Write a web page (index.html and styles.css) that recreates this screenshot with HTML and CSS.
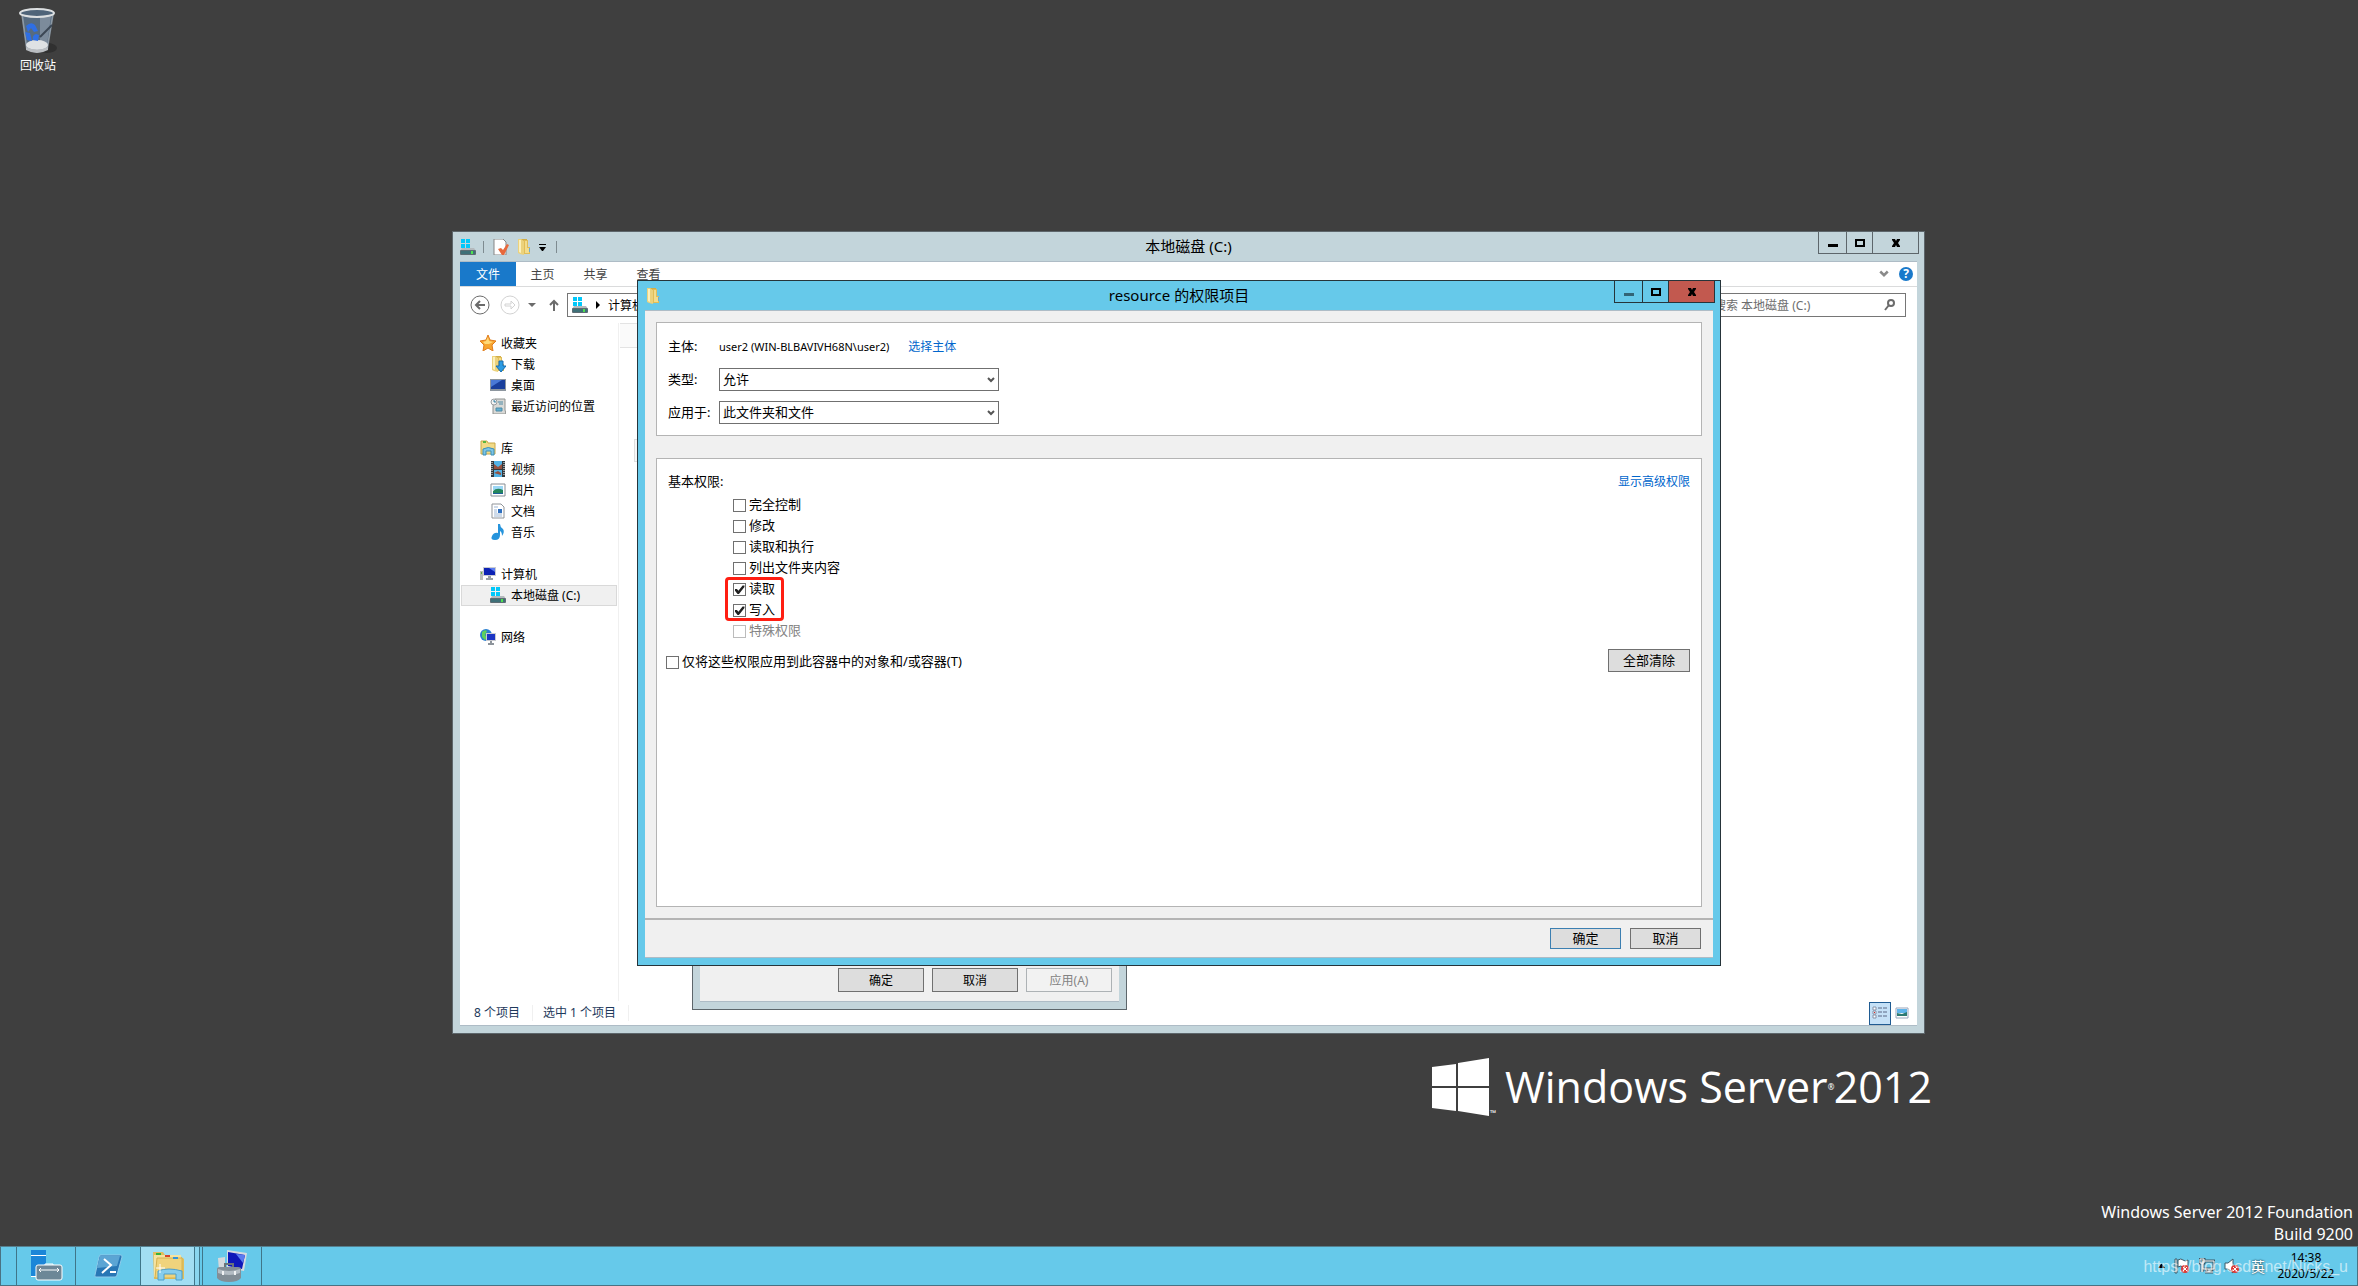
FILE: index.html
```html
<!DOCTYPE html>
<html lang="zh-CN">
<head>
    <meta charset="UTF-8">
    <meta name="viewport" content="width=device-width, initial-scale=1.0">
    <title>Windows Server 2012</title>
    <link rel="stylesheet" href="styles.css">
</head>
<body>
    <!-- shared icons -->
    <svg class="sprite" aria-hidden="true">
        <symbol id="i-drive" viewBox="0 0 16 16">
            <path d="M1 0h4v4H1zM6 0h4v4H6zM1 5h4v4H1zM6 5h4v4H6z" fill="#00c8fa"/>
            <path d="M2 9h12l2 3H0z" fill="#b4babd"/>
            <rect x="0" y="11" width="16" height="5" rx="1" fill="#5d6c73"/>
            <rect x="1" y="12" width="14" height="3" fill="#3f7078"/>
            <rect x="11" y="12" width="2" height="3" fill="#4fe04f"/>
        </symbol>
        <symbol id="i-folder" viewBox="0 0 16 16">
            <path d="M2 0h9v14H2z" fill="#d2ad45"/>
            <path d="M8 1h4v7h2v7H8z" fill="#e0bd58"/>
            <path d="M9 2h2v7h2v5H9z" fill="#f3dc8c"/>
            <path d="M2 0h3l3 2v14l-4-1-2-1z" fill="#ecd27c"/>
            <path d="M3 1h2v13l-2-1z" fill="#fbf0bd"/>
            <path d="M13 9h1v4h-1z" fill="#6fa9cf"/>
        </symbol>
        <symbol id="i-min" viewBox="0 0 10 10"><path d="M0 6h10v3H0z" fill="currentColor"/></symbol>
        <symbol id="i-max" viewBox="0 0 10 10"><path d="M0 1h10v8H0zM2 3v4h6V3z" fill-rule="evenodd" fill="currentColor"/></symbol>
        <symbol id="i-close" viewBox="0 0 10 10"><path d="M1 1h3l1 2 1-2h3v1L7 5l2 3v1H6L5 7 4 9H1V8l2-3-2-3z" fill="currentColor"/></symbol>
        <symbol id="i-chevron" viewBox="0 0 8 6"><path d="M1 1l3 3 3-3" fill="none" stroke="currentColor" stroke-width="2"/></symbol>
        <symbol id="i-screen" viewBox="0 0 16 16">
            <path d="M0 5h3v9H0z" fill="#b9bdb9"/><path d="M1 6h1v2H1z" fill="#60b040"/>
            <path d="M3 1h13v9H3z" fill="#c9cbd0"/><path d="M4 2h11v7H4z" fill="#0c22b4"/><path d="M9 2h6v4z" fill="#5b7cf0"/>
            <path d="M8 10h3v2h2v2H6v-2h2z" fill="#9aa0a6"/>
        </symbol>
    </svg>

    <main class="desktop">
        <a class="shortcut" href="#">
            <svg width="40" height="48" viewBox="0 0 40 48">
                <ellipse cx="29" cy="41" rx="10" ry="5" fill="#303030"/>
                <path d="M3 6l5 36q11 7 22 0l6-36z" fill="#8c99a5"/>
                <path d="M5 8l4 30q10 4 20 0l5-30q-15 5-29 0z" fill="#566b80"/>
                <path d="M22 9l11 0-4 29h-7z" fill="#7c8b9b"/>
                <path d="M34 18L22 30" stroke="#3c4754" stroke-width="2"/>
                <ellipse cx="19" cy="38" rx="11" ry="5" fill="#dfe2e4"/>
                <path d="M8 40q11 5 22 0v3q-11 6-22 0z" fill="#b9bdc1"/>
                <path d="M8 19q5-5 9-1l3 6-4 1-3-4-3 4zM7 25l5 1 2 8-5-1zM15 33q-1-5 3-6l3 1-1 6z" fill="#2f6fe4"/>
                <ellipse cx="19" cy="6" rx="17" ry="4" fill="#4f6479" stroke="#dcdfe1" stroke-width="2"/>
            </svg>
            <span>回收站</span>
        </a>

        <section class="window explorer">
            <header class="titlebar">
                <div class="quick">
                    <svg width="16" height="16"><use href="#i-drive"/></svg>
                    <i class="bar"></i>
                    <svg width="16" height="16" viewBox="0 0 16 16">
                        <path d="M1 0h9l3 3v13H1z" fill="#fff" stroke="#858585"/>
                        <path d="M5 10l3-1 2 2 4-6 2 1-5 10H9z" fill="#e8693c"/>
                    </svg>
                    <svg width="16" height="16"><use href="#i-folder"/></svg>
                    <svg class="menu-caret" width="7" height="7" viewBox="0 0 7 7"><path d="M0 0h7v1H0zM0 3h7L4 7H3z"/></svg>
                    <i class="bar"></i>
                </div>
                <h1>本地磁盘 (C:)</h1>
                <div class="controls">
                    <button aria-label="最小化"><svg width="10" height="10"><use href="#i-min"/></svg></button>
                    <button aria-label="最大化"><svg width="10" height="10"><use href="#i-max"/></svg></button>
                    <button aria-label="关闭"><svg width="10" height="10"><use href="#i-close"/></svg></button>
                </div>
            </header>
            <div class="client">
                <nav class="ribbon">
                    <button class="active">文件</button>
                    <button>主页</button>
                    <button>共享</button>
                    <button>查看</button>
                    <svg class="expand" width="10" height="8"><use href="#i-chevron"/></svg>
                    <button class="help" aria-label="帮助">?</button>
                </nav>
                <div class="address-row">
                    <button class="back" aria-label="后退">
                        <svg width="20" height="20" viewBox="0 0 20 20" fill="none" stroke="#6b6b6b" stroke-width="2">
                            <circle cx="10" cy="10" r="9" stroke-width="1"/><path d="M15 10H6M10 6l-4 4 4 4"/>
                        </svg>
                    </button>
                    <button aria-label="前进">
                        <svg width="20" height="20" viewBox="0 0 20 20" fill="none" stroke="#d2d2d2">
                            <circle cx="10" cy="10" r="9"/><path d="M5 9h6V6l4 4-4 4v-3H5z"/>
                        </svg>
                    </button>
                    <svg width="8" height="4" viewBox="0 0 8 4"><path d="M0 0h8L4 4z" fill="#6b6b6b"/></svg>
                    <button class="up" aria-label="上移">
                        <svg width="10" height="12" viewBox="0 0 10 12" fill="none" stroke="#6b6b6b" stroke-width="2"><path d="M5 12V2M1 6l4-4 4 4"/></svg>
                    </button>
                    <div class="address">
                        <svg width="16" height="16"><use href="#i-drive"/></svg>
                        <svg width="4" height="8" viewBox="0 0 4 8"><path d="M0 0l4 4-4 4z"/></svg>
                        <span>计算机</span>
                    </div>
                    <div class="search">
                        <input type="text" placeholder="搜索 本地磁盘 (C:)" aria-label="搜索">
                        <svg width="12" height="12" viewBox="0 0 12 12" fill="none" stroke="#6b6b6b" stroke-width="2"><circle cx="7" cy="4" r="3"/><path d="M5 6l-4 5"/></svg>
                    </div>
                </div>
                <div class="body">
                    <aside class="tree">
                        <ul>
                            <li><svg viewBox="0 0 16 16"><path d="M8 0l2 5 6 1-4 4 1 6-5-3-5 3 1-6-4-4 6-1z" fill="#f7a530" stroke="#e07c1c"/><path d="M8 2l1 4 4 1-4 2-4 0-2-2 3-1z" fill="#ffd978"/></svg>收藏夹
                                <ul>
                                    <li><svg viewBox="0 0 16 16"><use href="#i-folder"/><path d="M9 5h4v5h3l-5 6-5-6h3z" fill="#2b9be4" stroke="#1a6cae"/></svg>下载</li>
                                    <li><svg viewBox="0 0 16 16"><path d="M0 2h16v12H0z" fill="#8d969f"/><path d="M1 3h14v9H1z" fill="#1a3f9c"/><path d="M1 3h11L1 10z" fill="#4a79d6"/></svg>桌面</li>
                                    <li><svg viewBox="0 0 16 16"><path d="M5 1h10v11l1 4H3V8z" fill="#d9d9d6" stroke="#8f9291"/><circle cx="4" cy="4" r="3" fill="#f3f3f3" stroke="#9a9d9f"/><path d="M4 2v2h2M8 4h5M9 6h4M6 10h6v3H6z" fill="#63b1d4" stroke="#4e8aa5"/></svg>最近访问的位置</li>
                                </ul>
                            </li>
                            <li><svg viewBox="0 0 16 16"><path d="M1 1h6l1 2h7v11H1z" fill="#f1da87" stroke="#c9a849"/><path d="M3 1h3v2H3z" fill="#59b540"/><path d="M3 15V9q5-3 11 0v6h-3v-4H6v4z" fill="#7cc5e6" stroke="#3d8fb8"/></svg>库
                                <ul>
                                    <li><svg viewBox="0 0 16 16"><path d="M1 0h14v16H1z" fill="#33383c"/><path d="M4 0h8v8H4zM4 9h8v7H4z" fill="#53b3e6"/><path d="M4 3l4 3 4-3v5H4zM4 12l4-2 3 2v2z" fill="#96513f"/><path d="M2 1v14M14 1v14" stroke="#fff" stroke-dasharray="1 1"/></svg>视频</li>
                                    <li><svg viewBox="0 0 16 16"><path d="M1 2h14v12H1z" fill="#fff" stroke="#868d94"/><path d="M3 4h10v4H3z" fill="#9bd6f5"/><path d="M3 9q4-4 10-1v4H3z" fill="#24865d"/><path d="M3 11h10v1H3z" fill="#1d5f99"/></svg>图片</li>
                                    <li><svg viewBox="0 0 16 16"><path d="M2 1h9l3 3v11H2z" fill="#fff" stroke="#8f9499"/><path d="M4 4h4M4 7h3M4 9h3M4 11h8M4 13h8" stroke="#9db6d3"/><path d="M8 6h4v4H8z" fill="#2d6fc0"/></svg>文档</li>
                                    <li><svg viewBox="0 0 16 16"><path d="M8 0h2q0 3 3 5 2 3-1 7 0-4-2-5v4q0 5-5 5t-3-4 6-3z" fill="#2694dc"/></svg>音乐</li>
                                </ul>
                            </li>
                            <li><svg viewBox="0 0 16 16"><use href="#i-screen"/></svg>计算机
                                <ul>
                                    <li class="selected"><svg viewBox="0 0 16 16"><use href="#i-drive"/></svg>本地磁盘 (C:)</li>
                                </ul>
                            </li>
                            <li><svg viewBox="0 0 16 16"><circle cx="6" cy="6" r="6" fill="#2a7fd0"/><path d="M2 3q3-3 5-1L5 6l2 3-2 2-3-3z" fill="#5ed15a"/><path d="M6 4h10v8H6z" fill="#c9cbd0"/><path d="M7 5h8v6H7z" fill="#1b35c4"/><path d="M10 12h2v2h2v2H8v-2h2z" fill="#8d949b"/></svg>网络</li>
                        </ul>
                    </aside>
                    <div class="files">
                        <div class="file-head"></div>
                        <div class="file-row"></div>
                    </div>
                </div>
                <footer class="status">
                    <span>8 个项目</span>
                    <span>选中 1 个项目</span>
                    <div class="views">
                        <button class="active" aria-label="详细信息">
                            <svg width="16" height="14" viewBox="0 0 16 14"><path d="M1 1h3v3H1zM1 5h3v3H1zM1 9h3v3H1z" fill="#fff" stroke="#8592a8"/><path d="M6 2h4M11 2h4M6 6h4M11 6h4M6 10h4M11 10h4" stroke="#5c6885"/><path d="M2 6h1v1H2z" fill="#d22"/></svg>
                        </button>
                        <button aria-label="大图标">
                            <svg width="14" height="12" viewBox="0 0 14 12"><path d="M1 1h12v10H1z" fill="#fff" stroke="#98a5bb"/><path d="M2 2h10v4H2z" fill="#5fb4ea"/><path d="M2 6l5 1 5-2v4H2z" fill="#2d7a72"/></svg>
                        </button>
                    </div>
                </footer>
            </div>
        </section>

        <section class="window properties">
            <div class="client">
                <button class="btn">确定</button>
                <button class="btn">取消</button>
                <button class="btn" disabled>应用(A)</button>
            </div>
        </section>

        <section class="window dialog">
            <header class="titlebar">
                <div class="quick"><svg width="16" height="16"><use href="#i-folder"/></svg></div>
                <h1>resource 的权限项目</h1>
                <div class="controls">
                    <button class="dim" aria-label="最小化"><svg width="10" height="10"><use href="#i-min"/></svg></button>
                    <button aria-label="最大化"><svg width="10" height="10"><use href="#i-max"/></svg></button>
                    <button class="close" aria-label="关闭"><svg width="10" height="10"><use href="#i-close"/></svg></button>
                </div>
            </header>
            <form class="client">
                <div class="panel principal">
                    <span>主体:</span>
                    <p>user2 (WIN-BLBAVIVH68N\user2) <a href="#">选择主体</a></p>
                    <label for="type">类型:</label>
                    <div class="combo">
                        <select id="type"><option>允许</option></select>
                        <svg width="8" height="6"><use href="#i-chevron"/></svg>
                    </div>
                    <label for="scope">应用于:</label>
                    <div class="combo">
                        <select id="scope"><option>此文件夹和文件</option></select>
                        <svg width="8" height="6"><use href="#i-chevron"/></svg>
                    </div>
                </div>
                <div class="panel permissions">
                    <div class="panel-head">
                        <span>基本权限:</span>
                        <a href="#">显示高级权限</a>
                    </div>
                    <div class="checks">
                        <label><input type="checkbox">完全控制</label>
                        <label><input type="checkbox">修改</label>
                        <label><input type="checkbox">读取和执行</label>
                        <label><input type="checkbox">列出文件夹内容</label>
                        <div class="marked">
                            <label><input type="checkbox" checked>读取</label>
                            <label><input type="checkbox" checked>写入</label>
                        </div>
                        <label class="disabled"><input type="checkbox" disabled>特殊权限</label>
                    </div>
                    <div class="panel-foot">
                        <label><input type="checkbox">仅将这些权限应用到此容器中的对象和/或容器(T)</label>
                        <button type="button" class="btn">全部清除</button>
                    </div>
                </div>
                <footer>
                    <button type="button" class="btn default">确定</button>
                    <button type="button" class="btn">取消</button>
                </footer>
            </form>
        </section>

        <div class="brand">
            <svg width="58" height="60" viewBox="0 0 58 60"><path d="M0 9l24-3v22H0zM26 5l31-5v28H26zM0 30h24v23L0 50zM26 30h31v28l-31-5z" fill="#fff"/></svg>
            <small>™</small>
            <span class="brand-name">Windows Server</span>
            <small class="reg">®</small>
            <span class="brand-name">2012</span>
        </div>
        <p class="build">Windows Server 2012 Foundation<br>Build 9200</p>
    </main>

    <footer class="taskbar">
        <button class="task" aria-label="服务器管理器">
            <svg width="34" height="32" viewBox="0 0 34 32">
                <path d="M2 0h15v5H2zM2 6h15v21H2z" fill="#1b86d8"/><path d="M2 5h15v1H2zM2 26h6v1H2z" fill="#fff"/>
                <rect x="7" y="15" width="26" height="15" rx="2" fill="#6d8797" stroke="#fff"/>
                <path d="M16 15v-1h8v1M10 20h20M12 18l-2 2 2 2M28 18l2 2-2 2" fill="none" stroke="#fff"/>
            </svg>
        </button>
        <button class="task wide" aria-label="PowerShell">
            <svg width="30" height="24" viewBox="0 0 30 24">
                <path d="M7 1h21q1 0 1 2l-5 18q0 2-2 2H3q-2 0-1-2L6 3z" fill="#2877b5" stroke="#8ecbea"/>
                <path d="M7 2h20l-3 10-20 2z" fill="#5ba5d4"/>
                <path d="M11 5l7 6-9 8M17 18h6" fill="none" stroke="#fff" stroke-width="2"/>
            </svg>
        </button>
        <button class="task open" aria-label="文件资源管理器">
            <svg width="34" height="32" viewBox="0 0 34 32">
                <path d="M2 2h10l2 3h14l5 4v20H3z" fill="#e2be5c"/>
                <path d="M3 5h27v22H3z" fill="#f5e2a0"/><path d="M6 8h25v20H4z" fill="#f0d37c" stroke="#d4b252"/>
                <path d="M5 3h5v2H5z" fill="#35b13a"/><path d="M14 5h5v2h-5z" fill="#d6452b"/><path d="M22 7h5v2h-5z" fill="#3294d8"/>
                <path d="M7 30v-9q10-4 24 0v9h-6v-6H13v6z" fill="#86cdee" stroke="#4f9fc9"/>
                <path d="M9 14v9M5 18h9" stroke="#fff"/>
            </svg>
        </button>
        <i class="stack"></i>
        <button class="task" aria-label="计算机管理">
            <svg width="32" height="32" viewBox="0 0 32 32">
                <path d="M2 8l7-1v14H3z" fill="#d5d9dc"/><path d="M11 0l20 3-3 18-17-3z" fill="#d7dbe0"/><path d="M12 2l17 3-3 14-14-3z" fill="#0e18b8"/><path d="M20 4l9 1-2 8z" fill="#5a7cf0"/>
                <path d="M9 17v-3h8v3" fill="none" stroke="#6a737a" stroke-width="2"/>
                <path d="M1 19q0-2 3-2h18q3 0 3 2v9q-3 4-12 4T1 28z" fill="#838e96"/><path d="M2 19q11 4 22 0v4q-11 4-22 0z" fill="#b3bcc3"/>
                <path d="M6 21h2v4H6zM18 21h2v4h-2z" fill="#f0f2f3"/>
            </svg>
        </button>
        <div class="tray">
            <svg width="7" height="4" viewBox="0 0 7 4"><path d="M0 4h7L4 0H3z"/></svg>
            <svg width="16" height="16" viewBox="0 0 16 16"><path d="M1 1h2v14H1zM4 2q3-2 5 0t5 0v7q-3 2-5 0t-5 0z" fill="#fff" stroke="#3b5a68"/><circle cx="11" cy="11" r="4" fill="#db3a33"/><path d="M9 9l4 4M13 9l-4 4" stroke="#fff"/></svg>
            <svg width="16" height="16" viewBox="0 0 16 16"><path d="M4 3h11v8H4zM6 14h8M10 11v3M1 1h4v4H1zM3 5v9" fill="none" stroke="#3b5a68" stroke-width="3"/><path d="M4 3h11v8H4zM6 14h8M10 11v3M1 1h4v4H1zM3 5v9" fill="none" stroke="#fff"/></svg>
            <svg width="16" height="16" viewBox="0 0 16 16"><path d="M1 5h3l5-4v14l-5-4H1z" fill="#fff" stroke="#3b5a68"/><circle cx="11" cy="11" r="4" fill="#db3a33"/><path d="M9 9l4 4M13 9l-4 4" stroke="#fff"/></svg>
            <span class="ime">英</span>
            <time>14:38<br>2020/5/22</time>
        </div>
        <span class="watermark">https://blog.csdn.net/Nicks_u</span>
    </footer>
</body>
</html>
```
FILE: styles.css
```css
* {
    margin: 0;
    padding: 0;
    box-sizing: border-box;
}

body {
    display: flex;
    flex-direction: column;
    height: 100vh;
    overflow: hidden;
    background: #3f3f3f;
    color: #000;
    font-family: 'Noto Sans', 'Noto Sans CJK SC', sans-serif;
    font-size: 12px;
    line-height: 21px;
}

button,
input,
select {
    font: inherit;
    color: inherit;
    background: none;
    border: none;
    outline: none;
}

svg {
    display: block;
    flex: none;
}

ul {
    list-style: none;
}

a {
    color: #0066cc;
    text-decoration: none;
}

.sprite {
    position: absolute;
    width: 0;
    height: 0;
}

.desktop {
    position: relative;
    flex: 1;
}

.shortcut {
    position: absolute;
    left: 8px;
    top: 7px;
    width: 60px;
    display: flex;
    flex-direction: column;
    align-items: center;
    color: #fff;
}

/* windows */
.window {
    position: absolute;
    display: flex;
    flex-direction: column;
    padding: 0 7px 7px;
    background: #c3d5db;
    border: 1px solid #5d666b;
}

.explorer {
    left: 452px;
    right: 433px;
    top: 231px;
    bottom: 212px;
}

.properties {
    left: 692px;
    width: 435px;
    top: 840px;
    bottom: 236px;
}

.dialog {
    left: 637px;
    right: 637px;
    top: 280px;
    bottom: 280px;
    background: #66c9ea;
    border-color: #26343a;
}

.titlebar {
    display: grid;
    grid-template-columns: 1fr auto 1fr;
    height: 29px;
    flex: none;
}

.titlebar h1 {
    font-size: 15px;
    font-weight: 400;
    line-height: 28px;
}

.quick {
    display: flex;
    align-items: center;
    gap: 7px;
}

.quick .bar {
    width: 1px;
    height: 12px;
    background: #7e8b90;
}

.bar + svg {
    margin-left: 2px;
}

.menu-caret {
    margin: 2px 3px 0 0;
}

.controls {
    justify-self: end;
    display: flex;
    height: 22px;
    margin-right: -2px;
    color: #000;
    border: solid #5d666b;
    border-width: 0 1px 1px;
}

.controls button {
    width: 26px;
    display: flex;
    align-items: center;
    justify-content: center;
}

.controls button + button {
    border-left: 1px solid #5d666b;
}

.controls button:first-child {
    width: 27px;
}

.controls button:last-child {
    width: 46px;
}

.controls .dim {
    color: #326476;
}

.controls .close {
    background: #c2594f;
}

.dialog .controls,
.dialog .controls button {
    border-color: #26343a;
}

.client {
    flex: 1;
    display: flex;
    flex-direction: column;
    min-height: 0;
    background: #fff;
    border-top: 1px solid #aebcc6;
    border-bottom: 1px solid #aebcc6;
}

/* explorer */
.ribbon {
    display: flex;
    align-items: center;
    height: 25px;
    padding-right: 4px;
    border-bottom: 1px solid #dadbdc;
    color: #444;
}

.ribbon button {
    width: 53px;
    height: 24px;
}

.ribbon .active {
    width: 56px;
    background: #1979ca;
    color: #fff;
}

.ribbon .expand {
    margin-left: auto;
    margin-right: 10px;
    color: #8a8a8a;
}

.ribbon .help {
    width: 14px;
    height: 14px;
    border-radius: 50%;
    background: #1979ca;
    color: #fff;
    font-weight: 700;
    line-height: 14px;
}

.address-row {
    display: flex;
    align-items: center;
    gap: 8px;
    padding: 6px 11px 6px 10px;
}

.address-row .back {
    margin-right: 2px;
}

.address-row .up {
    margin: 0 -2px 0 3px;
    padding: 0 2px;
}

.address,
.search {
    display: flex;
    align-items: center;
    height: 24px;
    border: 1px solid #767676;
}

.address {
    flex: 1;
    gap: 8px;
    padding-left: 4px;
}

.search {
    width: 203px;
    padding: 0 9px 0 10px;
}

.search input {
    flex: 1;
    min-width: 0;
}

.search input::placeholder {
    color: #6d6d6d;
    opacity: 1;
}

.body {
    flex: 1;
    display: flex;
    min-height: 0;
}

.tree {
    width: 159px;
    padding: 10px 1px 0;
    border-right: 1px solid #f0f0f0;
}

.tree > ul > li {
    padding-left: 40px;
    margin-bottom: 21px;
    position: relative;
}

.tree li li {
    margin-left: -40px;
    padding-left: 50px;
    position: relative;
}

.tree svg {
    position: absolute;
    width: 16px;
    height: 16px;
    left: 19px;
    top: 2px;
}

.tree li li svg {
    left: 29px;
}

.tree .selected {
    background: #f0f0f0;
    box-shadow: inset 0 0 0 1px #d9d9d9;
}

.files {
    flex: 1;
    padding-left: 1px;
    padding-right: 30%;
}

.file-head {
    height: 25px;
    background: #fafafa;
    border: 1px solid #e3e3e3;
    border-width: 1px 0;
}

.file-row {
    height: 23px;
    margin: 91px 0 0 14px;
    background: #f7f7f7;
    border: 1px solid #dedede;
}

.status {
    display: flex;
    align-items: center;
    height: 24px;
    padding: 0 4px 0 14px;
    color: #1e395b;
}

.status span {
    padding-right: 12px;
    margin-right: 10px;
    border-right: 1px solid #f0f0f0;
    line-height: 16px;
}

.views {
    display: flex;
    margin-left: auto;
}

.views button {
    display: flex;
    align-items: center;
    justify-content: center;
    width: 22px;
    height: 23px;
}

.views .active {
    background: #c5e1f7;
    border: 1px solid #1f5b92;
}

/* properties window behind the dialog */
.btn {
    height: 23px;
    min-width: 71px;
    background: #ddd;
    border: 1px solid #707070;
    font-size: 13px;
}

.btn:disabled {
    background: #f2f2f2;
    border-color: #adb2b5;
    color: #838383;
}

.btn.default {
    border-color: #3c7fb1;
}

.properties .client {
    flex-direction: row;
    align-items: flex-end;
    justify-content: flex-end;
    gap: 8px;
    padding: 0 7px 9px;
    background: #f0f0f0;
}

.properties .btn {
    width: 86px;
    height: 24px;
    font-size: 12px;
}

/* permission entry dialog */
.dialog .client {
    padding: 11px 0 0;
    background: #f0f0f0;
    font-size: 13px;
}

.panel {
    margin: 0 11px;
    background: #fff;
    border: 1px solid #b4b4b4;
}

.principal {
    display: grid;
    grid-template-columns: 51px 1fr;
    align-items: center;
    row-gap: 10px;
    padding: 12px 11px 11px;
    margin-bottom: 22px;
}

.principal p {
    font-size: 11px;
    line-height: 23px;
}

.principal a {
    margin-left: 16px;
    font-size: 12px;
}

.combo {
    position: relative;
    width: 280px;
}

.combo select {
    display: block;
    width: 100%;
    height: 23px;
    padding: 0 3px;
    appearance: none;
    background: #fff;
    border: 1px solid #707070;
}

.combo svg {
    position: absolute;
    right: 4px;
    top: 9px;
    color: #555;
}

.permissions {
    flex: 1;
    padding: 12px 11px 0 9px;
}

.panel-head {
    display: flex;
    justify-content: space-between;
    padding-left: 2px;
    margin-bottom: 2px;
}

.panel-head a {
    font-size: 12px;
}

.checks {
    padding-left: 67px;
}

label {
    display: flex;
    align-items: center;
}

input[type="checkbox"] {
    appearance: none;
    width: 13px;
    height: 13px;
    margin: 2px 3px 0 0;
    background: #fff;
    border: 1px solid #707070;
}

input[type="checkbox"]:checked::before {
    content: '';
    display: block;
    width: 11px;
    height: 11px;
    background: #212121;
    clip-path: polygon(9% 45%, 27% 45%, 40% 62%, 78% 14%, 95% 14%, 95% 27%, 45% 90%, 32% 90%, 9% 62%);
}

/* red highlight drawn round the ticked rows */
.marked {
    width: 59px;
    margin: -1px 0 -1px -8px;
    padding-left: 5px;
    border: 3px solid #ff1e12;
    border-radius: 4px;
}

.marked label {
    height: 21px;
    margin: -2px 0;
}

.marked label + label {
    margin-top: 2px;
}

.disabled {
    color: #838383;
}

input[type="checkbox"]:disabled {
    border-color: #bcbcbc;
}

.panel-foot {
    display: flex;
    justify-content: space-between;
    margin-top: 8px;
}

.panel-foot label {
    padding-top: 2px;
}

.panel-foot .btn {
    width: 82px;
}

.dialog footer {
    display: flex;
    justify-content: flex-end;
    gap: 9px;
    margin-top: 11px;
    padding: 8px 12px;
    border-top: 2px solid #b4b4b4;
}

.dialog footer .btn {
    height: 21px;
    line-height: 17px;
}

/* wallpaper text */
.brand {
    position: absolute;
    right: 426px;
    bottom: 128px;
    display: flex;
    align-items: flex-end;
    color: #fff;
}

.brand small {
    font-size: 8px;
    line-height: 10px;
    width: 15px;
}

.brand .reg {
    width: 6px;
    align-self: center;
}

.brand-name {
    font-family: 'Open Sans', sans-serif;
    font-size: 43px;
    line-height: 62px;
}

.build {
    position: absolute;
    right: 5px;
    bottom: 1px;
    color: #fff;
    font-size: 16px;
    line-height: 22px;
    text-align: right;
}

/* taskbar */
.taskbar {
    position: relative;
    display: flex;
    height: 40px;
    padding-left: 15px;
    background: #66c9ea;
    border: 1px solid #4a7283;
    border-top-color: #56808f;
}

.task {
    width: 60px;
    display: flex;
    align-items: center;
    justify-content: center;
    border: solid #3f7589;
    border-width: 0 1px;
    margin-right: -1px;
}

.task.wide {
    width: 66px;
}

.task.open {
    width: 55px;
    background: #a2def3;
}

.stack {
    width: 6px;
    margin-right: 2px;
    background: #8ad6ef;
    border: solid #3f7589;
    border-width: 0 1px;
}

.tray {
    display: flex;
    align-items: center;
    gap: 9px;
    margin-left: auto;
    padding-right: 21px;
}

.ime {
    width: 16px;
    margin-left: 2px;
    color: #fff;
    font-size: 14px;
    text-shadow: 0 0 2px #000;
}

.tray time {
    width: 60px;
    line-height: 16px;
    text-align: center;
}

.watermark {
    position: absolute;
    right: 9px;
    top: 9px;
    color: rgba(255, 255, 255, 0.6);
    font-family: 'Liberation Sans', sans-serif;
    font-size: 16px;
}
```
